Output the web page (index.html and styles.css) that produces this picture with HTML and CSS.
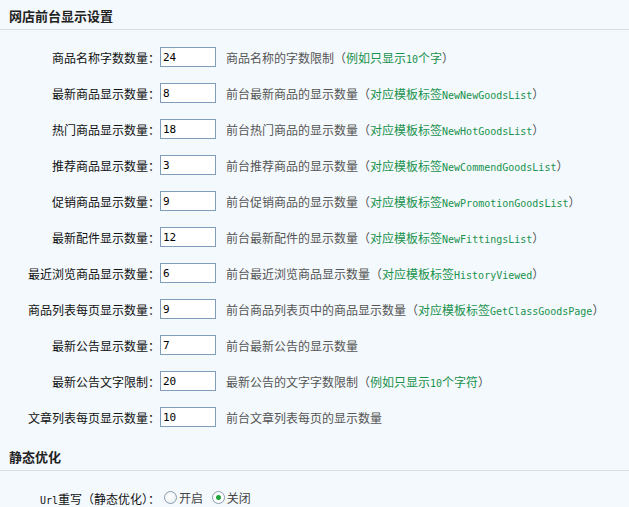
FILE: index.html
```html
<!DOCTYPE html>
<html lang="zh-CN">
<head>
  <meta charset="UTF-8">
  <title>网店前台显示设置</title>
  <link rel="stylesheet" href="styles.css">
</head>
<body>
  <div class="section-title">网店前台显示设置</div>
  <table class="settings">
    <tr>
      <td class="label">商品名称字数数量：</td>
      <td class="field"><input type="text" value="24"></td>
      <td class="desc">商品名称的字数限制（<span class="hint">例如只显示<span class="en">10</span>个字</span>）</td>
    </tr>
    <tr>
      <td class="label">最新商品显示数量：</td>
      <td class="field"><input type="text" value="8"></td>
      <td class="desc">前台最新商品的显示数量（<span class="hint">对应模板标签<span class="en">NewNewGoodsList</span></span>）</td>
    </tr>
    <tr>
      <td class="label">热门商品显示数量：</td>
      <td class="field"><input type="text" value="18"></td>
      <td class="desc">前台热门商品的显示数量（<span class="hint">对应模板标签<span class="en">NewHotGoodsList</span></span>）</td>
    </tr>
    <tr>
      <td class="label">推荐商品显示数量：</td>
      <td class="field"><input type="text" value="3"></td>
      <td class="desc">前台推荐商品的显示数量（<span class="hint">对应模板标签<span class="en">NewCommendGoodsList</span></span>）</td>
    </tr>
    <tr>
      <td class="label">促销商品显示数量：</td>
      <td class="field"><input type="text" value="9"></td>
      <td class="desc">前台促销商品的显示数量（<span class="hint">对应模板标签<span class="en">NewPromotionGoodsList</span></span>）</td>
    </tr>
    <tr>
      <td class="label">最新配件显示数量：</td>
      <td class="field"><input type="text" value="12"></td>
      <td class="desc">前台最新配件的显示数量（<span class="hint">对应模板标签<span class="en">NewFittingsList</span></span>）</td>
    </tr>
    <tr>
      <td class="label">最近浏览商品显示数量：</td>
      <td class="field"><input type="text" value="6"></td>
      <td class="desc">前台最近浏览商品显示数量（<span class="hint">对应模板标签<span class="en">HistoryViewed</span></span>）</td>
    </tr>
    <tr>
      <td class="label">商品列表每页显示数量：</td>
      <td class="field"><input type="text" value="9"></td>
      <td class="desc">前台商品列表页中的商品显示数量（<span class="hint">对应模板标签<span class="en">GetClassGoodsPage</span></span>）</td>
    </tr>
    <tr>
      <td class="label">最新公告显示数量：</td>
      <td class="field"><input type="text" value="7"></td>
      <td class="desc">前台最新公告的显示数量</td>
    </tr>
    <tr>
      <td class="label">最新公告文字限制：</td>
      <td class="field"><input type="text" value="20"></td>
      <td class="desc">最新公告的文字字数限制（<span class="hint">例如只显示<span class="en">10</span>个字符</span>）</td>
    </tr>
    <tr>
      <td class="label">文章列表每页显示数量：</td>
      <td class="field"><input type="text" value="10"></td>
      <td class="desc">前台文章列表每页的显示数量</td>
    </tr>
  </table>

  <div class="section-title">静态优化</div>
  <table class="settings">
    <tr>
      <td class="label"><span class="en">Url</span>重写（静态优化）：</td>
      <td class="radios" colspan="2">
        <label><input type="radio" name="rewrite">开启</label>
        <label><input type="radio" name="rewrite" checked>关闭</label>
      </td>
    </tr>
  </table>
</body>
</html>
```

FILE: styles.css
```css
body {
  margin: 0;
  padding: 0;
  background-color: #f4f9fd;
  font-family: "Noto Sans CJK SC", "DejaVu Sans", sans-serif;
  font-size: 12px;
  color: #222;
}

.section-title {
  height: 29px;
  line-height: 31px;
  padding: 0 9px;
  font-size: 13px;
  font-weight: bold;
  color: #222;
  border-bottom: 1px solid #d6dfe6;
}

.settings {
  border-collapse: collapse;
  margin: 9px 0 6px 0;
}

.settings td {
  padding: 0;
  height: 36px;
  white-space: nowrap;
}

.label {
  width: 160px;
  text-align: right;
  color: #111;
}

.field {
  width: 66px;
}

.field input {
  display: block;
  box-sizing: border-box;
  width: 56px;
  height: 20px;
  margin: 0;
  padding: 1px 2px;
  border: 1px solid #7f9db9;
  background: #fff;
  font-family: "DejaVu Sans Mono", monospace;
  font-size: 11px;
  color: #000;
  outline: none;
}

.desc {
  color: #555;
}

.hint {
  color: #19924c;
}

.en {
  font-family: "DejaVu Sans Mono", monospace;
  font-size: 10px;
}

.radios label {
  display: inline-flex;
  align-items: center;
  color: #444;
  margin-right: 2px;
}

/* old-style radio: white disc, small green dot when checked */
.radios input {
  appearance: none;
  box-sizing: border-box;
  width: 13px;
  height: 13px;
  margin: 0 2px 0 4px;
  border: 1px solid #8a9caf;
  border-radius: 50%;
  background: radial-gradient(circle at 40% 40%, #fff 0, #e6ebef 100%);
}

.radios input:checked {
  background: radial-gradient(circle, #21a33a 0, #21a33a 2px, #fff 3px);
}
```
